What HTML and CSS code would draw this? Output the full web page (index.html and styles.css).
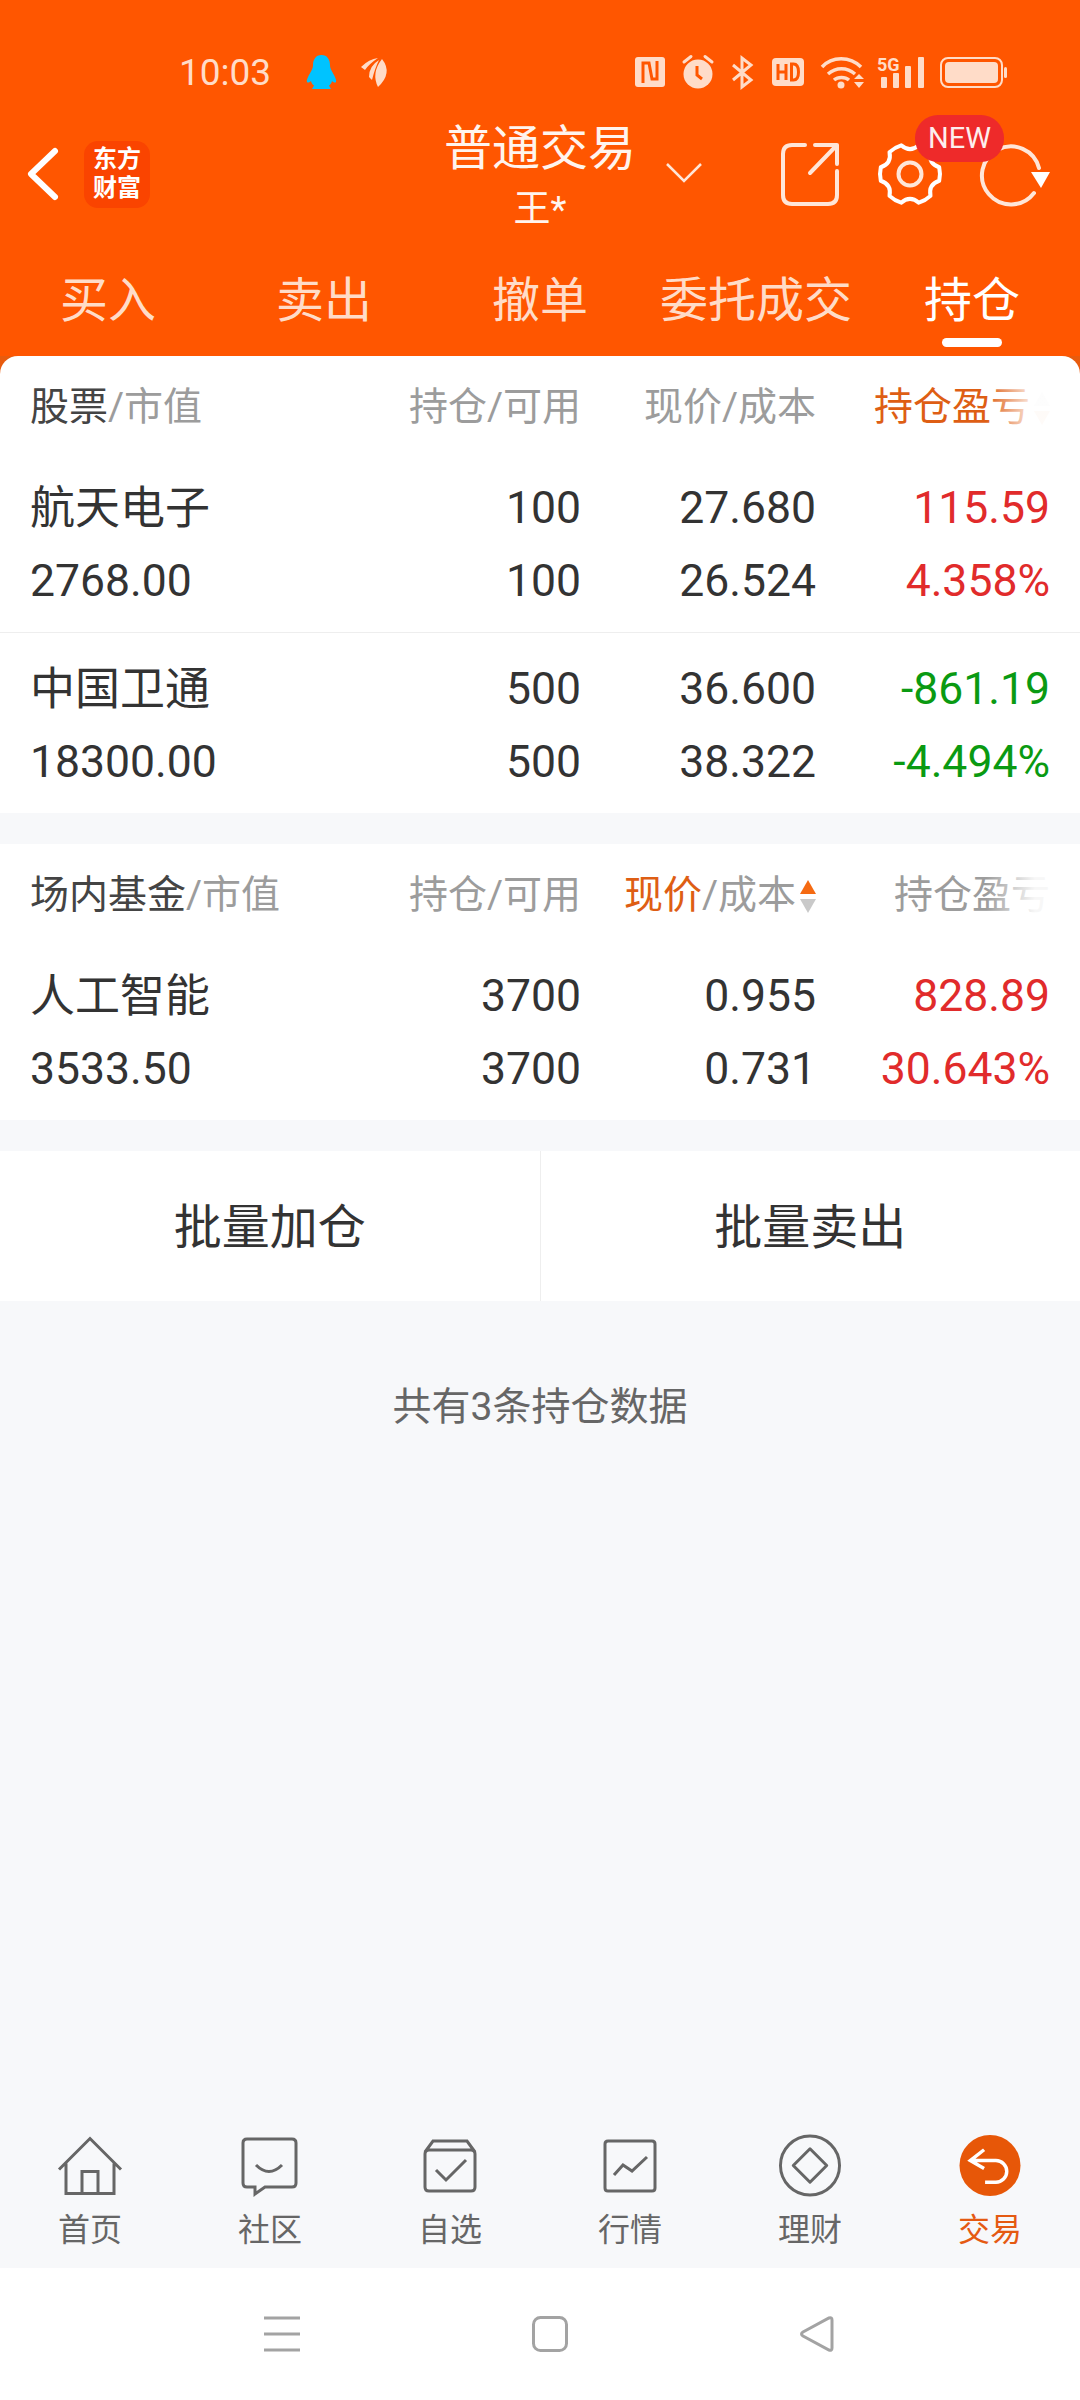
FILE: index.html
```html
<!DOCTYPE html>
<html lang="zh-CN">
<head>
<meta charset="utf-8">
<title>持仓</title>
<link rel="stylesheet" href="styles.css">
</head>
<body>
<div class="page">
  <header class="top">
    <div class="status">
      <div class="status-left">
        <span class="time">10:03</span>
        <svg class="ic-qq" viewBox="0 0 31 34"><path fill="#00c3ff" d="M15.5 0C9.5 0 7 5 7 10c0 2-.5 3.500-1.500 5.500C3 20 0 25 1 27c.8 1.200 3 .2 4-1 .5 2 1.500 3.500 3 4.500L6 34h19l-2-3.500c1.500-1 2.500-2.500 3-4.500 1 1.200 3.200 2.200 4 1 1-2-2-7-4.500-11.500C24.500 13.500 24 12 24 10c0-5-2.500-10-8.500-10z"/></svg>
        <svg class="ic-tail" viewBox="0 0 26 29"><path fill="#ffdcc8" d="M0 9Q8 1 17 0Q8 6 4 12ZM8 19Q8 8 18 2Q14 10 11 22ZM17 29Q10 15 21 1Q32 15 17 29Z"/></svg>
      </div>
      <div class="status-right">
        <svg class="ic-nfc" viewBox="0 0 30 30"><rect width="30" height="30" rx="3" fill="#ffdcc8"/><path fill="none" stroke="#ff5600" stroke-width="3" d="M8 26V6h6l3 16h5V4"/></svg>
        <svg class="ic-alarm" viewBox="0 0 32 34"><circle cx="16" cy="19" r="14.500" fill="#ffdcc8"/><path stroke="#ffdcc8" stroke-width="3" stroke-linecap="round" fill="none" d="M2 7l7-5.500M30 7l-7-5.500"/><path stroke="#ff5600" stroke-width="3" fill="none" d="M15 11v9l5 4"/></svg>
        <svg class="ic-bt" viewBox="0 0 21 33"><path fill="none" stroke="#ffdcc8" stroke-width="3" d="M1 9l18 15-9 7V2l9 7L1 24"/></svg>
        <svg class="ic-hd" viewBox="0 0 32 28"><rect width="32" height="28" rx="4" fill="#ffdcc8"/><path fill="none" stroke="#ff5600" stroke-width="3" d="M6 6v16M14 6v16M6 14h8M19.500 6v16h2c3.500 0 5-3 5-8s-1.500-8-5-8z"/></svg>
        <svg class="ic-wifi" viewBox="0 0 43 34"><path fill="none" stroke="#ffdcc8" stroke-width="3.500" d="M1 12C11 1 29 1 40 12M7 19c8-7 19-7 27 0M13 25c4-3.500 11-3.500 15 0"/><circle cx="20" cy="30" r="3.500" fill="#ffdcc8"/><path fill="#ffdcc8" d="M33 24l5-5 5 5zM33 27h10l-5 6z"/></svg>
        <svg class="ic-signal" viewBox="0 0 47 32"><text class="fiveg" x="0" y="15">5G</text><g fill="#ffdcc8"><rect x="4" y="21" width="6" height="11" rx="1"/><rect x="16" y="17" width="6" height="15" rx="1"/><rect x="28" y="10" width="6" height="22" rx="1"/><rect x="41" y="1" width="6" height="31" rx="1"/></g></svg>
        <svg class="ic-batt" viewBox="0 0 67 31"><rect x="1" y="1" width="61" height="29" rx="7" fill="none" stroke="#ffdcc8" stroke-width="2"/><rect x="5" y="5" width="53" height="21" rx="4" fill="#ffdcc8"/><rect x="64" y="10" width="3" height="11" rx="1.500" fill="#ffdcc8"/></svg>
      </div>
    </div>
    <div class="titlebar">
      <div class="tb-left">
        <svg class="ic-back" viewBox="0 0 31 54"><path d="M28 4L4 27l24 23" fill="none" stroke="#fff" stroke-width="6" stroke-linecap="round" stroke-linejoin="round"/></svg>
        <div class="logo"><span>东方</span><span>财富</span></div>
      </div>
      <div class="tb-center">
        <div class="title">普通交易</div>
        <div class="subtitle">王*</div>
      </div>
      <div class="tb-right">
        <svg class="ic-chev" viewBox="0 0 36 20"><path d="M1 1l17 17L35 1" fill="none" stroke="#ffe6d8" stroke-width="2.500"/></svg>
        <svg class="ic-share" viewBox="0 0 58 63"><path fill="none" stroke="#ffe6d8" stroke-width="4" stroke-linecap="round" stroke-linejoin="round" d="M24 2H11Q2 2 2 11v41q0 9 9 9h36q9 0 9-9V28M29 30L56 2M34 2h22v19"/></svg>
        <div class="gear-wrap">
          <svg class="ic-gear" viewBox="0 0 66 64"><path fill="none" stroke="#fff" stroke-width="4" stroke-linejoin="round" d="M62.200 25.250A30 30 0 0 1 62.200 38.750Q51.200 42.500 53.500 53.900A30 30 0 0 1 41.800 60.700Q33 53 24.200 60.700A30 30 0 0 1 12.500 53.900Q14.800 42.500 3.800 38.750A30 30 0 0 1 3.800 25.250Q14.800 21.500 12.500 10.100A30 30 0 0 1 24.200 3.300Q33 11 41.800 3.300A30 30 0 0 1 53.500 10.100Q51.200 21.500 62.200 25.250Z"/><circle cx="33" cy="32" r="11.500" fill="none" stroke="#ffe6d8" stroke-width="4"/></svg>
          <span class="new">NEW</span>
        </div>
        <svg class="ic-refresh" viewBox="0 0 70 63"><path fill="none" stroke="#ffe6d8" stroke-width="4" stroke-linecap="round" d="M54 50A29 29 0 1 1 59 25"/><path fill="#fff" d="M51 29h19l-9 16z"/></svg>
      </div>
    </div>
    <nav class="tabs">
      <div class="tab">买入</div>
      <div class="tab">卖出</div>
      <div class="tab">撤单</div>
      <div class="tab">委托成交</div>
      <div class="tab tab-on">持仓<i class="tab-bar"></i></div>
    </nav>
  </header>

  <main class="main">
    <div class="corner-back">
      <section class="card card-first">
        <div class="row-head">
          <div class="h-name"><span class="dark">股票</span>/市值</div>
          <div class="h-cell">持仓/可用</div>
          <div class="h-cell">现价/成本</div>
          <div class="h-cell h-fade"><span class="hot">持仓盈亏</span><span class="sort sort-faint"><i class="up"></i><i class="down"></i></span></div>
        </div>
        <div class="row row-line">
          <div class="cell-l cn">航天电子</div><div>100</div><div>27.680</div><div class="red">115.59</div>
          <div class="cell-l">2768.00</div><div>100</div><div>26.524</div><div class="red">4.358%</div>
        </div>
        <div class="row">
          <div class="cell-l cn">中国卫通</div><div>500</div><div>36.600</div><div class="green">-861.19</div>
          <div class="cell-l">18300.00</div><div>500</div><div>38.322</div><div class="green">-4.494%</div>
        </div>
      </section>
    </div>

    <section class="card card-second">
      <div class="row-head">
        <div class="h-name"><span class="dark">场内基金</span>/市值</div>
        <div class="h-cell">持仓/可用</div>
        <div class="h-cell"><span class="hot">现价</span>/成本<span class="sort"><i class="up up-on"></i><i class="down"></i></span></div>
        <div class="h-cell h-fade h-fade-end">持仓盈亏</div>
      </div>
      <div class="row">
        <div class="cell-l cn">人工智能</div><div>3700</div><div>0.955</div><div class="red">828.89</div>
        <div class="cell-l">3533.50</div><div>3700</div><div>0.731</div><div class="red">30.643%</div>
      </div>
    </section>

    <div class="batch">
      <div class="batch-btn batch-first">批量加仓</div>
      <div class="batch-btn">批量卖出</div>
    </div>
    <p class="count">共有3条持仓数据</p>
  </main>

  <footer class="tabbar">
    <div class="bt">
      <span class="bt-icon"><svg class="i64" viewBox="0 0 64 58"><path d="M1 33L32 2l31 31M8 27v30h48V27M24 57V35h16v22" class="line"/></svg></span>
      <span class="bt-label">首页</span>
    </div>
    <div class="bt">
      <span class="bt-icon"><svg class="i58" viewBox="0 0 58 58"><path d="M6 2h45q4 0 4 4v40q0 4-4 4H24l-10 7v-7H6q-4 0-4-4V6q0-4 4-4zM15 28q13 13 26 0" class="line"/></svg></span>
      <span class="bt-label">社区</span>
    </div>
    <div class="bt">
      <span class="bt-icon"><svg class="i54" viewBox="0 0 54 54"><path d="M2 13L10 2h34l8 11M6 11h42q4 0 4 4v33q0 4-4 4H6q-4 0-4-4V15q0-4 4-4zM13 31l10 10 20-20" class="line"/></svg></span>
      <span class="bt-label">自选</span>
    </div>
    <div class="bt">
      <span class="bt-icon"><svg class="i54" viewBox="0 0 54 54"><path d="M5 2h44q3 0 3 3v44q0 3-3 3H5q-3 0-3-3V5q0-3 3-3zM11 36l9-10 9 6 15-14" class="line"/></svg></span>
      <span class="bt-label">行情</span>
    </div>
    <div class="bt">
      <span class="bt-icon"><svg class="i64" viewBox="0 0 64 64"><circle cx="32" cy="32" r="30" class="line"/><path d="M32 15l17 17-17 17-17-17z" class="line line-round"/></svg></span>
      <span class="bt-label">理财</span>
    </div>
    <div class="bt bt-on">
      <span class="bt-icon"><svg class="i64" viewBox="0 0 64 64"><circle cx="32" cy="32" r="31" fill="#e75708"/><path d="M26 16L12 27l14 8M12 27h26a11 11 0 0 1 0 22H27" fill="none" stroke="#fff" stroke-width="3.500"/></svg></span>
      <span class="bt-label">交易</span>
    </div>
  </footer>

  <div class="sysnav">
    <svg class="nav-menu" viewBox="0 0 36 36"><path d="M0 2h36M0 18h36M0 34h36" fill="none" stroke="#a3a3a3" stroke-width="3"/></svg>
    <svg class="nav-home" viewBox="0 0 36 36"><rect x="1.500" y="1.500" width="33" height="33" rx="7" fill="none" stroke="#a3a3a3" stroke-width="3"/></svg>
    <svg class="nav-back" viewBox="0 0 36 36"><path d="M33 4v28q0 3-3 2L4 20q-3-2 0-4L30 2q3-1 3 2z" fill="none" stroke="#a3a3a3" stroke-width="3"/></svg>
  </div>
</div>
</body>
</html>
```
FILE: styles.css
```css
* { box-sizing: border-box; }
html, body { margin: 0; padding: 0; }
body {
  font-family: Roboto, "Noto Sans CJK SC", sans-serif;
  color: #333;
  background: #f7f8fa;
}
.page { width: 1080px; height: 2400px; display: flex; flex-direction: column; overflow: hidden; }
svg { display: block; flex: none; overflow: visible; }

/* header */
.top { background: #ff5600; height: 356px; flex: none; }
.status { height: 108px; padding: 54px 73px 0 180px; display: flex; justify-content: space-between; align-items: flex-start; }
.status-left { display: flex; align-items: center; height: 36px; }
.time { font-size: 37px; line-height: 38px; color: #ffdcc8; width: 89px; white-space: nowrap; margin-left: -1px; margin-top: 1px; }
.ic-qq { width: 31px; height: 34px; margin-left: 38px; }
.ic-tail { width: 26px; height: 29px; margin-left: 24px; }
.status-right { display: flex; align-items: center; height: 36px; }
.ic-nfc { width: 30px; height: 30px; }
.ic-alarm { width: 32px; height: 34px; margin-left: 17px; }
.ic-bt { width: 21px; height: 33px; margin-left: 18px; }
.ic-hd { width: 32px; height: 28px; margin-left: 19px; }
.ic-wifi { width: 43px; height: 34px; margin-left: 17px; }
.ic-signal { width: 47px; height: 32px; margin-left: 13px; }
.ic-batt { width: 67px; height: 31px; margin-left: 16px; }
.fiveg { font-family: Roboto, sans-serif; font-size: 18px; font-weight: 700; fill: #ffdcc8; }

.titlebar { height: 132px; display: grid; grid-template-columns: 1fr auto 1fr; align-items: center; }
.tb-left { display: flex; align-items: center; padding-left: 27px; }
.ic-back { width: 31px; height: 54px; }
.logo {
  width: 66px; height: 67px; margin-left: 26px; border-radius: 14px; background: #fa4400;
  color: #fff; font-size: 24px; font-weight: 700; line-height: 29px;
  display: flex; flex-direction: column; align-items: center; justify-content: center;
}
.tb-center { text-align: center; color: #fff; }
.title { font-size: 48px; line-height: 60px; color: #fff4ee; white-space: nowrap; }
.subtitle { font-size: 37px; line-height: 40px; margin-top: 11px; color: #fff4ee; }
.tb-right { display: flex; align-items: center; }
.ic-chev { width: 36px; height: 20px; margin-left: 30px; margin-top: -2px; }
.ic-share { width: 58px; height: 63px; margin-left: 79px; }
.gear-wrap { position: relative; width: 66px; height: 64px; margin-left: 38px; }
.ic-gear { width: 66px; height: 64px; }
.new {
  position: absolute; left: 38px; top: -27px; width: 89px; height: 47px; border-radius: 23px;
  background: #ee2a2a; color: #fdeeee; font-size: 29px; line-height: 47px; text-align: center;
}
.ic-refresh { width: 70px; height: 63px; margin-left: 37px; }

.tabs { height: 116px; display: grid; grid-template-columns: repeat(5, 216px); padding-top: 31px; }
.tab { font-size: 48px; line-height: 60px; color: #ffdcc8; text-align: center; display: flex; flex-direction: column; align-items: center; }
.tab-on { color: #fff; }
.tab-bar { display: block; width: 60px; height: 9px; border-radius: 5px; background: #fff; margin-top: 7px; }

/* tables */
.main { flex: 1; background: #f7f8fa; }
.corner-back { background: #e85b0e; }
.card { background: #fff; }
.card-first { border-radius: 18px 18px 0 0; }
.card-second { margin-top: 31px; }
.row-head, .row {
  display: grid;
  grid-template-columns: 1fr 200px 235px 234px;
  padding: 0 30px;
  text-align: right;
}
.row-head { height: 96px; padding-top: 27px; font-size: 39px; line-height: 48px; color: #9c9c9c; }
.h-name { text-align: left; white-space: nowrap; }
.dark { color: #444; }
.hot { color: #de5e14; }
.h-cell { position: relative; display: flex; justify-content: flex-end; align-items: center; height: 48px; white-space: nowrap; }
.h-fade::after {
  content: ""; position: absolute; right: -6px; top: 0; width: 70px; height: 48px;
  background: linear-gradient(90deg, rgba(255,255,255,0), rgba(255,255,255,.92) 70%);
}
.h-fade-end { padding-right: 0; }
.sort { display: flex; flex-direction: column; gap: 5px; margin-left: 4px; margin-top: 2px; }
.up, .down { display: block; width: 0; height: 0; border-left: 8px solid transparent; border-right: 8px solid transparent; }
.up { border-bottom: 14px solid #c9c9c9; }
.down { border-top: 14px solid #c9c9c9; }
.up-on { border-bottom-color: #f56a12; }
.sort-faint .up { border-bottom-color: #e4e4e4; }
.sort-faint .down { border-top-color: #f8c6a8; }

.row { height: 180px; padding-top: 20px; font-size: 44.500px; line-height: 73px; color: #333; grid-auto-rows: 73px; }
.row-line { height: 181px; border-bottom: 1px solid #eeeeee; }
.cell-l { text-align: left; white-space: nowrap; }
.cn { font-size: 45px; }
.red { color: #e12b2b; }
.green { color: #0a9a12; }

.batch { display: flex; height: 150px; margin-top: 31px; background: #fff; }
.batch-btn { flex: 1; font-size: 48px; line-height: 153px; text-align: center; color: #333; }
.batch-first { border-right: 1px solid #eeeeee; }
.count { margin: 81px 0 0; font-size: 39px; line-height: 50px; text-align: center; color: #666; }

/* bottom tabs */
.tabbar { flex: none; height: 138px; display: grid; grid-template-columns: repeat(6, 180px); background: #f7f8fa; padding-top: 4px; }
.bt { display: flex; flex-direction: column; align-items: center; }
.bt-icon { height: 63px; display: flex; align-items: center; justify-content: center; }
.bt-label { font-size: 32px; line-height: 40px; margin-top: 13px; color: #666; }
.bt-on .bt-label { color: #e55a12; }
.i64 { width: 64px; height: 63px; }
.i58 { width: 58px; height: 58px; }
.i54 { width: 54px; height: 54px; }
.line { fill: none; stroke: #666; stroke-width: 3px; }
.line-round { stroke-linejoin: round; }

.sysnav { flex: none; height: 132px; background: #fff; position: relative; display: flex; align-items: center; padding-left: 264px; padding-bottom: 0; }
.nav-menu { width: 36px; height: 36px; }
.nav-home { width: 36px; height: 36px; margin-left: 232px; }
.nav-back { width: 36px; height: 36px; margin-left: 231px; }
```
